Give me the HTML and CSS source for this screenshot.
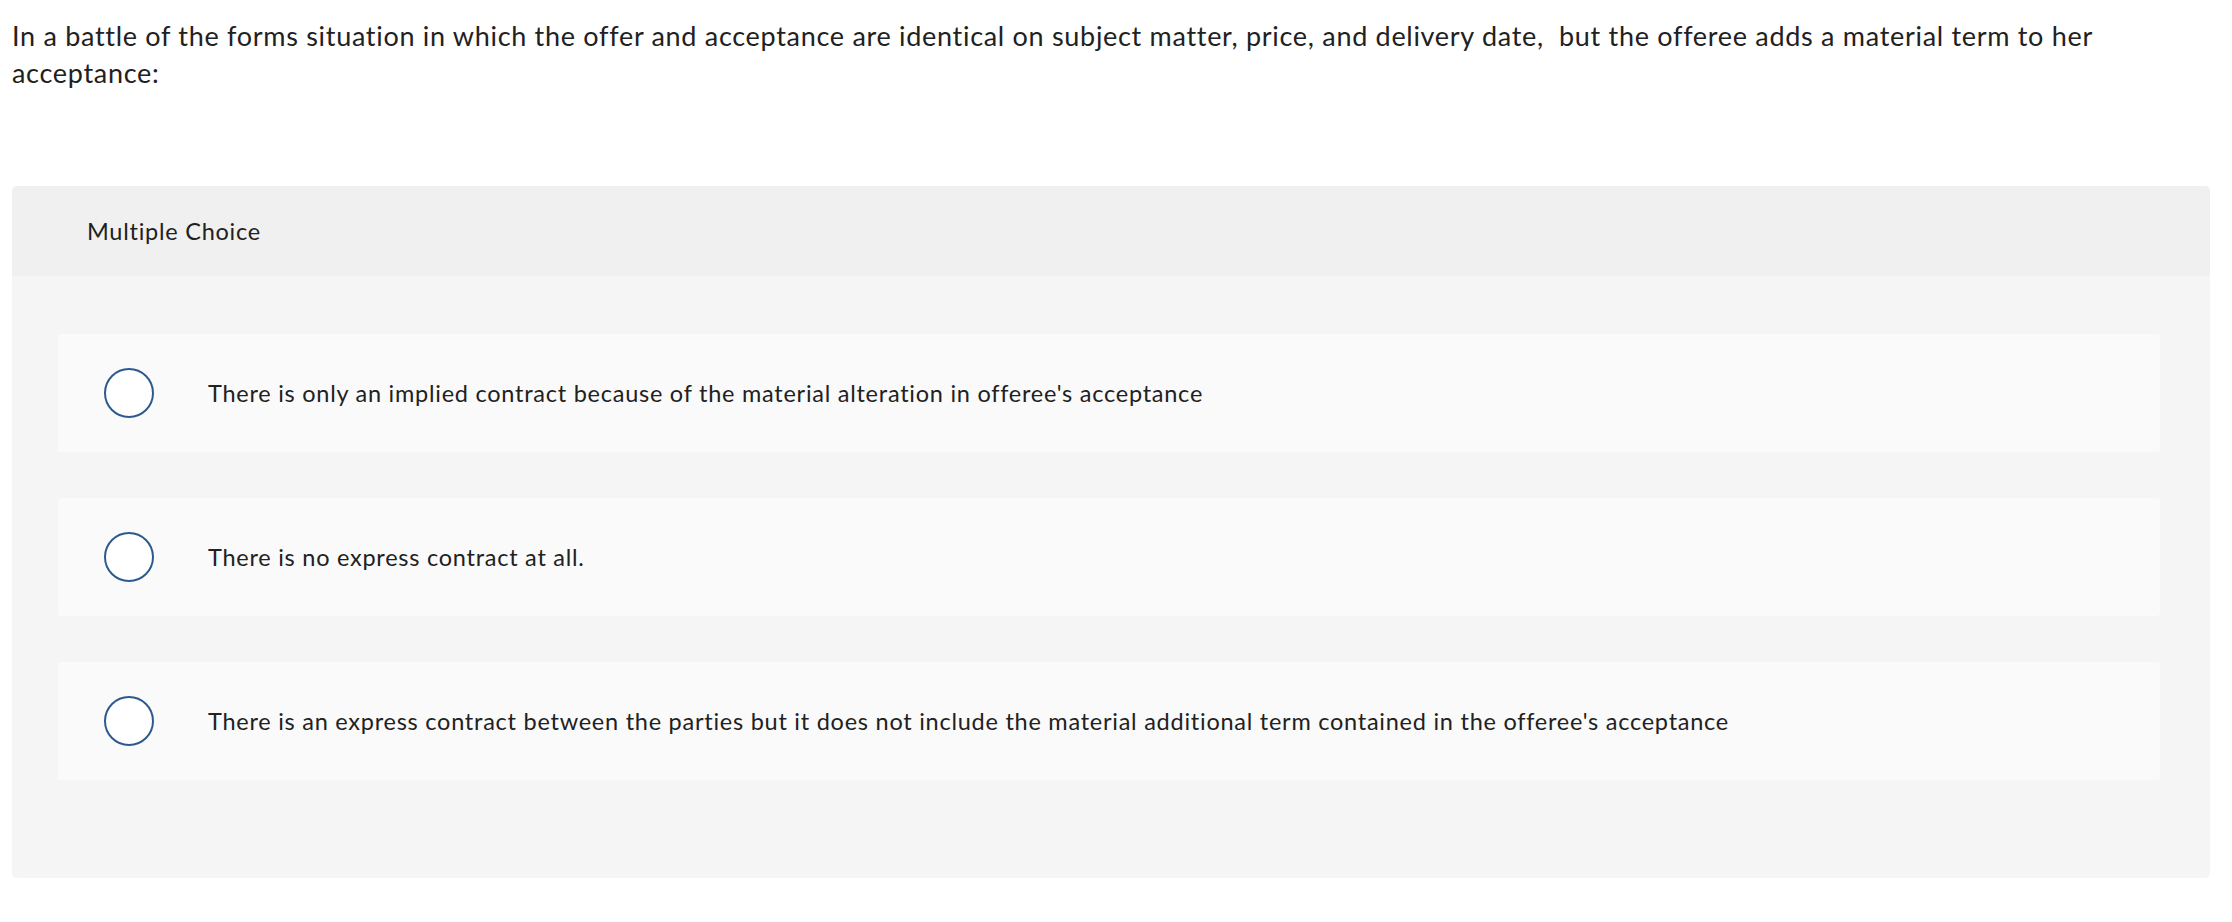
FILE: index.html
```html
<!DOCTYPE html>
<html lang="en">
<head>
<meta charset="utf-8">
<title>Multiple Choice</title>
<link rel="stylesheet" href="styles.css">
</head>
<body>
<div class="page">
  <p class="question">In a battle of the forms situation in which the offer and acceptance are identical on subject matter, price, and delivery date,&nbsp; but the offeree adds a material term to her acceptance:</p>
  <section class="panel">
    <header class="panel-head">Multiple Choice</header>
    <div class="panel-body">
      <label class="choice">
        <span class="radio"></span>
        <span class="choice-text">There is only an implied contract because of the material alteration in offeree's acceptance</span>
      </label>
      <label class="choice">
        <span class="radio"></span>
        <span class="choice-text">There is no express contract at all.</span>
      </label>
      <label class="choice">
        <span class="radio"></span>
        <span class="choice-text">There is an express contract between the parties but it does not include the material additional term contained in the offeree's acceptance</span>
      </label>
    </div>
  </section>
</div>
</body>
</html>
```

FILE: styles.css
```css
html, body {
  margin: 0;
  padding: 0;
  background: #ffffff;
}

body {
  font-family: Lato, "Liberation Sans", sans-serif;
  color: #212121;
}

.page {
  padding: 17px 22px 0 12px;
}

.question {
  margin: 0;
  font-size: 27px;
  line-height: 37px;
  letter-spacing: 0.7px;
}

.panel {
  margin-top: 95px;
  border-radius: 5px;
  overflow: hidden;
  background: #f5f5f5;
}

.panel-head {
  height: 90px;
  display: flex;
  align-items: center;
  padding-left: 75px;
  padding-bottom: 1px;
  box-sizing: border-box;
  background: #f0f0f0;
  font-size: 23.5px;
  letter-spacing: 0.75px;
}

.panel-body {
  display: flex;
  flex-direction: column;
  gap: 46px;
  padding: 58px 50px 98px 46px;
}

.choice {
  height: 118px;
  display: flex;
  align-items: center;
  background: #fafafa;
  border-radius: 4px;
  padding-left: 46px;
  font-size: 23.5px;
  letter-spacing: 0.75px;
}

.radio {
  flex: none;
  width: 46px;
  height: 46px;
  border: 2px solid #2c5a8e;
  border-radius: 50%;
  background: #ffffff;
}

.choice-text {
  margin-left: 54px;
}
```
